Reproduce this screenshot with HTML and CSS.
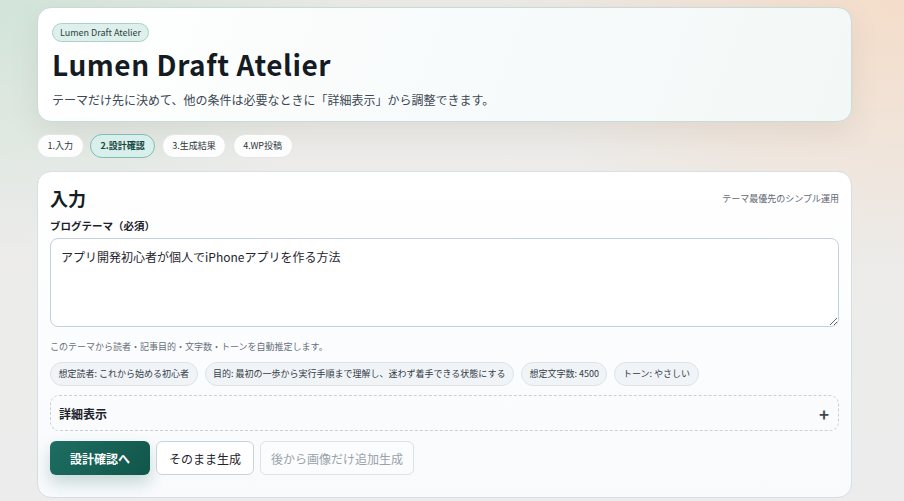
FILE: index.html
```html
<!DOCTYPE html>
<html lang="ja">
<head>
<meta charset="utf-8">
<title>Lumen Draft Atelier</title>
<link rel="stylesheet" href="styles.css">
</head>
<body>
<div class="page">
  <header class="hero">
    <span class="badge">Lumen Draft Atelier</span>
    <h1 class="title">Lumen Draft Atelier</h1>
    <p class="lead">テーマだけ先に決めて、他の条件は必要なときに「詳細表示」から調整できます。</p>
  </header>

  <nav class="steps">
    <span class="step">1.入力</span>
    <span class="step active">2.設計確認</span>
    <span class="step">3.生成結果</span>
    <span class="step">4.WP投稿</span>
  </nav>

  <section class="card">
    <div class="card-head">
      <h2 class="card-title">入力</h2>
      <span class="card-note">テーマ最優先のシンプル運用</span>
    </div>
    <label class="field-label" for="theme">ブログテーマ（必須）</label>
    <textarea id="theme" class="theme-input">アプリ開発初心者が個人でiPhoneアプリを作る方法</textarea>
    <p class="hint">このテーマから読者・記事目的・文字数・トーンを自動推定します。</p>
    <div class="chips">
      <span class="chip">想定読者: これから始める初心者</span>
      <span class="chip">目的: 最初の一歩から実行手順まで理解し、迷わず着手できる状態にする</span>
      <span class="chip">想定文字数: 4500</span>
      <span class="chip">トーン: やさしい</span>
    </div>
    <div class="details">
      <span class="details-title">詳細表示</span>
      <span class="details-plus">+</span>
    </div>
    <div class="actions">
      <button class="btn btn-primary">設計確認へ</button>
      <button class="btn btn-secondary">そのまま生成</button>
      <button class="btn btn-disabled" disabled>後から画像だけ追加生成</button>
    </div>
  </section>
</div>
</body>
</html>
```

FILE: styles.css
```css
* { box-sizing: border-box; }

html, body {
  margin: 0;
  padding: 0;
  height: 100%;
}

body {
  font-family: "Noto Sans CJK JP", "Noto Sans", sans-serif;
  color: #1b232c;
  background-color: #ecebe9;
  background-image:
    radial-gradient(ellipse 520px 360px at 0% 0%, rgba(208, 228, 216, 0.95), rgba(208, 228, 216, 0) 70%),
    radial-gradient(ellipse 560px 380px at 100% 0%, rgba(245, 220, 200, 0.95), rgba(245, 220, 200, 0) 72%),
    linear-gradient(180deg, #ecebe8 0%, #ececec 100%);
  overflow: hidden;
}

.page {
  width: 815px;
  margin-left: 37px;
  padding-top: 7px;
}

.hero {
  display: flex;
  flex-direction: column;
  align-items: flex-start;
  border: 1px solid #c5dcd8;
  border-radius: 14px;
  background: linear-gradient(110deg, #ffffff 0%, #f8fbfb 50%, #f3f8f7 100%);
  box-shadow: 0 10px 28px rgba(120, 110, 90, 0.12);
  padding: 15px 14px 12px;
}

.badge {
  display: block;
  font-size: 9px;
  line-height: 17px;
  padding: 0 7px;
  border: 1px solid #a8d2ca;
  border-radius: 10px;
  background: #dff0ec;
  color: #27453f;
}

.title {
  margin: 4px 0 0;
  font-size: 28px;
  line-height: 36px;
  font-weight: 700;
  letter-spacing: 0.02em;
  color: #141b22;
}

.lead {
  margin: 9px 0 0;
  font-size: 12px;
  line-height: 18px;
  color: #3c4853;
}

.steps {
  display: flex;
  gap: 6.5px;
  margin-top: 12px;
}

.step {
  display: block;
  height: 24px;
  line-height: 22px;
  padding: 0 9.5px;
  font-size: 9px;
  color: #2c3640;
  background: rgba(255, 255, 255, 0.9);
  border: 1px solid #e3e6e6;
  border-radius: 12px;
}

.step.active {
  background: #d9efec;
  border-color: #7fbdb3;
  color: #17463f;
  font-weight: 700;
}

.card {
  margin-top: 13px;
  border: 1px solid #d7dee5;
  border-radius: 14px;
  background: linear-gradient(180deg, #ffffff 0%, #f8fafc 100%);
  padding: 13px 12px 22px 12px;
}

.card-head {
  display: flex;
  justify-content: space-between;
  align-items: center;
}

.card-title {
  margin: 0;
  font-size: 18px;
  line-height: 26px;
  font-weight: 700;
  color: #161d24;
}

.card-note {
  font-size: 9px;
  color: #5f6872;
}

.field-label {
  display: block;
  margin-top: 7px;
  font-size: 10.5px;
  line-height: 16px;
  font-weight: 700;
  color: #1a2129;
}

.theme-input {
  display: block;
  width: 100%;
  height: 89px;
  margin-top: 4px;
  padding: 8px 10px;
  font-family: inherit;
  font-size: 12px;
  line-height: 19px;
  color: #1f262e;
  border: 1px solid #c4d0dc;
  border-radius: 8px;
  background: #ffffff;
  resize: vertical;
}

.hint {
  margin: 13px 0 0;
  font-size: 9px;
  line-height: 14px;
  color: #66707a;
}

.chips {
  display: flex;
  gap: 7px;
  margin-top: 8px;
}

.chip {
  display: block;
  height: 24px;
  line-height: 22px;
  padding: 0 7.5px;
  font-size: 9px;
  color: #333d48;
  background: #f1f4f7;
  border: 1px solid #dce3ea;
  border-radius: 12px;
}

.details {
  display: flex;
  justify-content: space-between;
  align-items: center;
  height: 36px;
  margin-top: 9px;
  padding: 0 9px 0 8px;
  border: 1px dashed #c7d0d9;
  border-radius: 9px;
}

.details-title {
  font-size: 12px;
  font-weight: 700;
  color: #1c232b;
}

.details-plus {
  font-size: 17px;
  font-weight: 700;
  line-height: 1;
  color: #3d4750;
}

.actions {
  display: flex;
  gap: 6px;
  margin-top: 10px;
}

.btn {
  height: 34px;
  padding: 0 12px;
  font-family: inherit;
  font-size: 12px;
  white-space: nowrap;
  border-radius: 6px;
  cursor: pointer;
}

.btn-primary {
  padding: 0 20px;
  color: #ffffff;
  font-weight: 700;
  border: none;
  background: linear-gradient(135deg, #1e6e63 0%, #115549 100%);
  box-shadow: 0 8px 16px rgba(18, 90, 80, 0.22);
}

.btn-secondary {
  color: #1d242b;
  background: #ffffff;
  border: 1px solid #c9d3dd;
}

.btn-disabled {
  padding: 0 10px;
  color: #9aa2aa;
  background: #fbfcfd;
  border: 1px solid #dde2e7;
  cursor: default;
}
```
